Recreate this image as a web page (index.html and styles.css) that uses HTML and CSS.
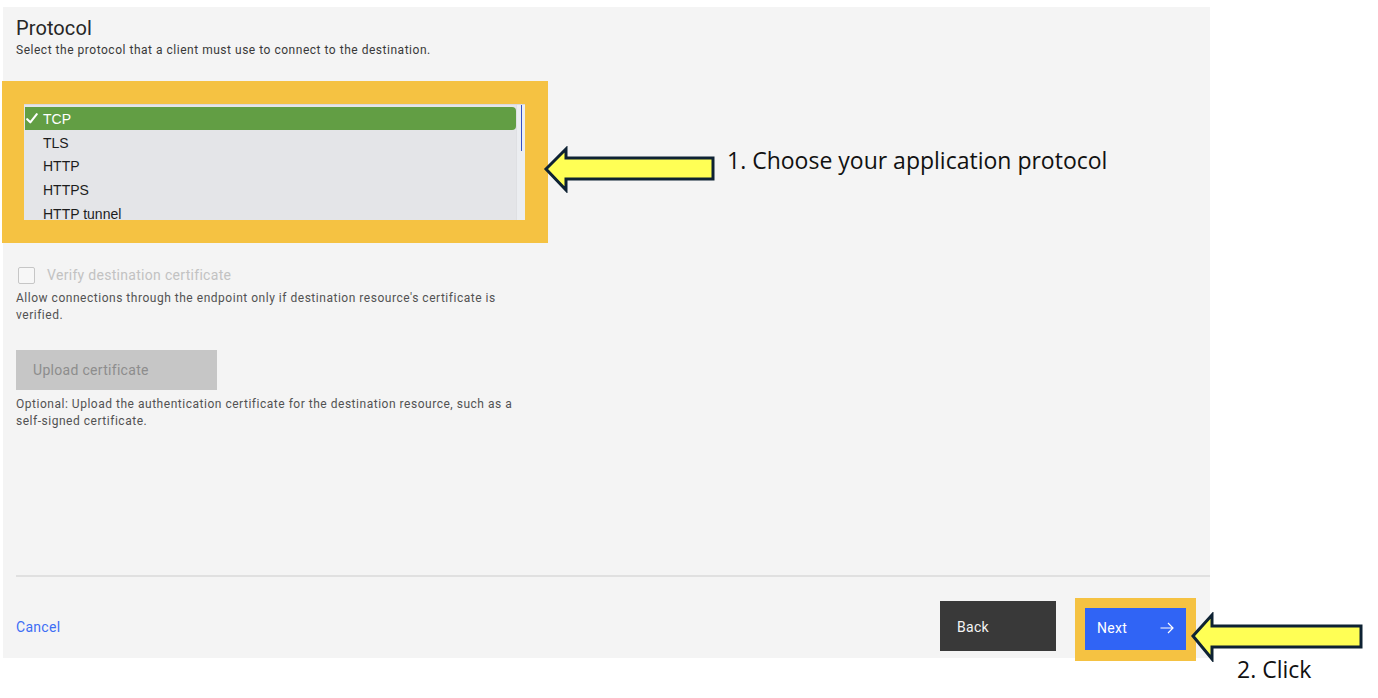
FILE: index.html
```html
<!DOCTYPE html>
<html lang="en">
<head>
<meta charset="utf-8">
<title>Protocol</title>
<link rel="stylesheet" href="styles.css">
</head>
<body>
<div class="page">
  <div class="panel">
    <div class="content">
      <h1 class="title">Protocol</h1>
      <p class="desc">Select the protocol that a client must use to connect to the destination.</p>

      <div class="highlight highlight-list">
        <div class="listbox">
          <div class="options">
            <div class="option selected">
              <span class="check"><svg width="12" height="11" viewBox="0 0 12 11" aria-hidden="true"><path d="M1.2 6.2 L4.3 9.3 L10.8 1.2" fill="none" stroke="#ffffff" stroke-width="2.1" stroke-linecap="round" stroke-linejoin="round"/></svg></span><span>TCP</span>
            </div>
            <div class="option"><span class="check"></span><span>TLS</span></div>
            <div class="option"><span class="check"></span><span>HTTP</span></div>
            <div class="option"><span class="check"></span><span>HTTPS</span></div>
            <div class="option"><span class="check"></span><span>HTTP tunnel</span></div>
          </div>
          <div class="scrollbar"><div class="thumb"></div></div>
        </div>
      </div>

      <label class="checkbox-row">
        <span class="checkbox"></span>
        <span class="checkbox-label">Verify destination certificate</span>
      </label>
      <p class="helper help-verify">Allow connections through the endpoint only if destination resource's certificate is verified.</p>

      <button class="btn-upload" type="button" disabled>Upload certificate</button>
      <p class="helper help-upload">Optional: Upload the authentication certificate for the destination resource, such as a self-signed certificate.</p>
    </div>

    <div class="footer">
      <a class="cancel" href="#">Cancel</a>
      <div class="actions">
        <button class="btn-back" type="button">Back</button>
        <div class="highlight highlight-next">
          <button class="btn-next" type="button">
            <span>Next</span>
            <svg class="next-icon" width="16" height="16" viewBox="0 0 16 16" aria-hidden="true">
              <path d="M1.5 8 H14 M9 3 L14 8 L9 13" fill="none" stroke="#ffffff" stroke-width="1.2"/>
            </svg>
          </button>
        </div>
      </div>
    </div>
  </div>

  <svg class="arrow arrow-one" width="174" height="47" viewBox="0 0 174 47" aria-hidden="true">
    <polygon points="3,23 23,3 23,12 170,12 170,33 23,33 23,44" fill="#ffff55" stroke="#0e2233" stroke-width="3" stroke-linejoin="miter"/>
  </svg>
  <div class="note note-one">1. Choose your application protocol</div>

  <svg class="arrow arrow-two" width="174" height="50" viewBox="0 0 174 50" aria-hidden="true">
    <polygon points="3,24 22,3 22,14 171,14 171,35 22,35 22,47" fill="#ffff55" stroke="#0e2233" stroke-width="3" stroke-linejoin="miter"/>
  </svg>
  <div class="note note-two">2. Click</div>
</div>
</body>
</html>
```

FILE: styles.css
```css
* {
  box-sizing: border-box;
}

html, body {
  margin: 0;
  padding: 0;
  background: #ffffff;
}

body {
  font-family: Roboto, "Liberation Sans", sans-serif;
  color: #161616;
  width: 1378px;
  height: 698px;
  overflow: hidden;
}

.page {
  position: relative;
  width: 1378px;
  height: 698px;
}

.panel {
  margin: 7px 0 0 3px;
  width: 1207px;
  height: 651px;
  background: #f4f4f4;
  padding: 8px 0 0 13px;
  display: flex;
  flex-direction: column;
}

.content {
  display: flex;
  flex-direction: column;
  align-items: flex-start;
}

.title {
  margin: 0;
  font-size: 20px;
  line-height: 27px;
  font-weight: 400;
  color: #262626;
  letter-spacing: 0.1px;
}

.desc {
  margin: 0;
  font-size: 12px;
  line-height: 16px;
  color: #393939;
  letter-spacing: 0.52px;
}

.highlight {
  background: #f5c242;
}

.highlight-list {
  margin: 23px 0 0 -14px;
  padding: 23px 23px 23px 22px;
}

.listbox {
  width: 501px;
  height: 116px;
  background: #e4e5e8;
  display: flex;
  overflow: hidden;
  border-top: 1px solid #d9dadd;
}

.options {
  flex: 1;
  padding-top: 2px;
  font-family: "Liberation Sans", Arial, sans-serif;
  font-size: 14px;
  color: #1d1d1d;
}

.option {
  display: flex;
  align-items: center;
  height: 23.75px;
  margin-left: 1px;
}

.option.selected {
  height: 23px;
  margin-bottom: 0.75px;
  background: #629e44;
  color: #ffffff;
  border-radius: 0 4px 4px 0;
}

.check {
  width: 18px;
  padding-left: 1px;
  display: flex;
  align-items: center;
}

.check svg {
  display: block;
}

.scrollbar {
  width: 9px;
  background: #eceef1;
  border-left: 1px solid #dfe0e3;
}

.thumb {
  width: 1px;
  height: 46px;
  margin-left: 4px;
  background: #3550c4;
}

.checkbox-row {
  margin-top: 23px;
  height: 18px;
  display: flex;
  align-items: center;
  padding-left: 2px;
}

.checkbox {
  width: 17px;
  height: 17px;
  border: 1px solid #c6c6c6;
  border-radius: 2px;
  background: #f7f7f7;
}

.checkbox-label {
  margin-left: 12px;
  font-size: 14px;
  line-height: 18px;
  color: #c2c2c2;
  letter-spacing: 0.3px;
}

.helper {
  margin: 0;
  max-width: 522px;
  font-size: 12px;
  line-height: 17px;
  color: #525252;
  letter-spacing: 0.52px;
}

.help-verify {
  margin-top: 6px;
}

.btn-upload {
  margin-top: 26px;
  width: 201px;
  height: 40px;
  padding: 0 0 0 17px;
  border: 0;
  background: #c6c6c6;
  color: #8d8d8d;
  font-family: Roboto, "Liberation Sans", sans-serif;
  font-size: 14px;
  text-align: left;
  letter-spacing: 0.3px;
}

.help-upload {
  margin-top: 6px;
}

.footer {
  margin-top: auto;
  height: 83px;
  border-top: 2px solid #e0e0e0;
  padding: 21px 14px 0 0;
  display: flex;
  justify-content: space-between;
  align-items: flex-start;
}

.cancel {
  margin-top: 20px;
  font-size: 14px;
  line-height: 18px;
  color: #3d6ef5;
  text-decoration: none;
  letter-spacing: 0.3px;
}

.actions {
  display: flex;
  align-items: flex-start;
  gap: 19px;
}

.btn-back {
  margin-top: 3px;
  width: 116px;
  height: 50px;
  padding: 2px 0 0 17px;
  border: 0;
  background: #393939;
  color: #f4f4f4;
  font-family: Roboto, "Liberation Sans", sans-serif;
  font-size: 14px;
  text-align: left;
  letter-spacing: 0.3px;
}

.highlight-next {
  padding: 10px 10px 11px 10px;
}

.btn-next {
  width: 101px;
  height: 42px;
  padding: 0 11px 2px 12px;
  border: 0;
  background: #3064f5;
  color: #ffffff;
  font-family: Roboto, "Liberation Sans", sans-serif;
  font-size: 14px;
  letter-spacing: 0.3px;
  display: flex;
  align-items: center;
  justify-content: space-between;
}

.next-icon {
  display: block;
}

.arrow {
  position: absolute;
  display: block;
}

.arrow-one {
  left: 543px;
  top: 139px;
}

.arrow-two {
  left: 1190px;
  top: 605px;
}

.note {
  position: absolute;
  font-family: "Open Sans", "Liberation Sans", sans-serif;
  font-size: 23px;
  line-height: 30px;
  color: #111111;
  white-space: nowrap;
}

.note-one {
  left: 727px;
  top: 138px;
}

.note-two {
  left: 1237px;
  top: 647px;
}
```
